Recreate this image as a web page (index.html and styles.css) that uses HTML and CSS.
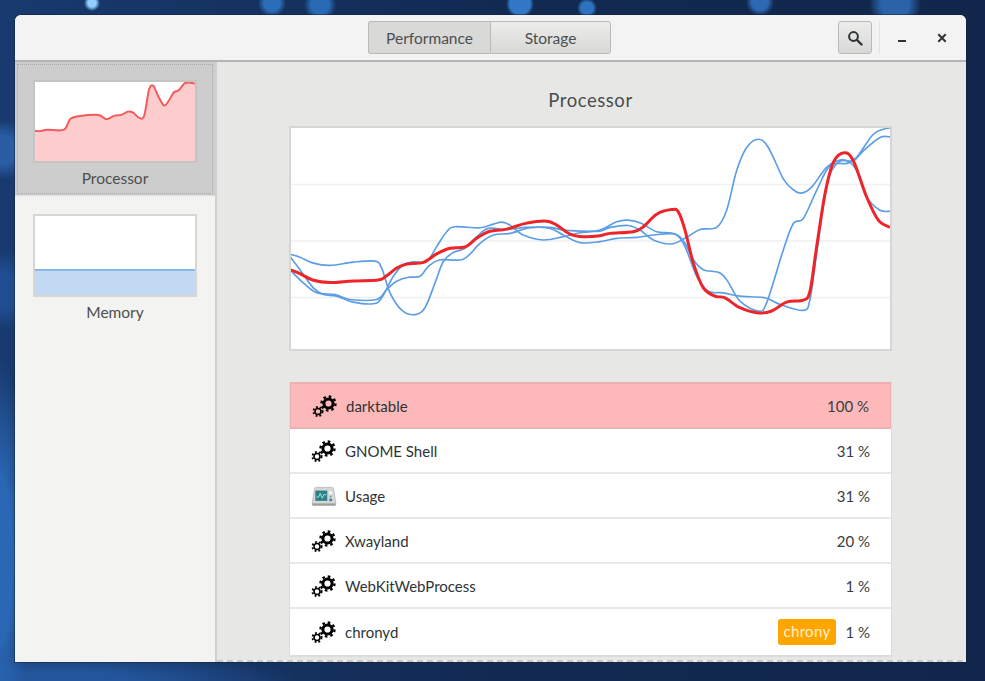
FILE: index.html
```html
<!DOCTYPE html>
<html lang="en">
<head>
<meta charset="utf-8">
<title>Usage</title>
<link rel="stylesheet" href="styles.css">
</head>
<body>
<svg class="defs" width="0" height="0" aria-hidden="true">
  <symbol id="gears" viewBox="0 0 26 24">
    <circle cx="16.5" cy="9.5" r="4.6" fill="none" stroke="#000" stroke-width="3"/>
    <circle cx="16.5" cy="9.5" r="7" fill="none" stroke="#000" stroke-width="2.4" stroke-dasharray="2.6 2.9"/>
    <circle cx="6" cy="17.5" r="3" fill="none" stroke="#000" stroke-width="1.6"/>
    <circle cx="6" cy="17.5" r="4.6" fill="none" stroke="#000" stroke-width="1.8" stroke-dasharray="1.8 2.02"/>
  </symbol>
  <symbol id="usage" viewBox="0 0 24 18">
    <rect x="1" y="15" width="22" height="3" rx="1" fill="#9aa0a0"/>
    <path d="M3 3Q3 1 5 1H19Q21 1 21 3L23 16H1Z" fill="#d4d7d5" stroke="#aeb2b0" stroke-width=".6"/>
    <rect x="4" y="4" width="11" height="9.5" fill="#2f7f88"/>
    <path d="M5 10L7 10L8.5 6.5L10.5 11L12 7.5L14 8" fill="none" stroke="#9fe8d8" stroke-width=".9"/>
    <rect x="16.5" y="4.5" width="3" height="3" fill="#f2f4f2"/>
    <circle cx="18" cy="9.5" r="1" fill="#7fa57c"/>
    <rect x="17" y="11.5" width="2.4" height="2.2" fill="#3c74c4"/>
  </symbol>
</svg>
<main class="window">
  <header class="titlebar">
    <div class="switcher">
      <button class="seg seg-on" type="button">Performance</button>
      <button class="seg" type="button">Storage</button>
    </div>
    <button class="search" type="button" aria-label="Search">
      <svg width="16" height="16" viewBox="0 0 16 16"><circle cx="6.5" cy="6.5" r="4.4" fill="none" stroke="#2e3436" stroke-width="2"/><path d="M10 10L14.5 14.5" stroke="#2e3436" stroke-width="2.4" stroke-linecap="round"/></svg>
    </button>
    <span class="sep"></span>
    <button class="ctl ctl-min" type="button" aria-label="Minimize">
      <svg width="10" height="10" viewBox="0 0 10 10"><rect x="1" y="7" width="8" height="2" fill="#2e3436"/></svg>
    </button>
    <button class="ctl ctl-close" type="button" aria-label="Close">
      <svg width="10" height="10" viewBox="0 0 10 10"><path d="M1.3 1.3L8.7 8.7M8.7 1.3L1.3 8.7" stroke="#2e3436" stroke-width="2"/></svg>
    </button>
  </header>
  <div class="body">
    <nav class="sidebar">
      <div class="tile tile-on">
        <svg class="thumb" viewBox="42 33 488 240" preserveAspectRatio="none"><path id="cpu-fill" fill="#fdcccc"/><path id="cpu-line" fill="none" stroke="#f4595c" stroke-width="6"/></svg>
        <span class="tile-label">Processor</span>
      </div>
      <div class="tile">
        <svg class="thumb" viewBox="0 0 161 80" preserveAspectRatio="none"><rect y="54.5" width="161" height="25.5" fill="#c3d9f3"/><path d="M0 54.5H161" stroke="#5b9be0" stroke-width="1.4"/></svg>
        <span class="tile-label">Memory</span>
      </div>
    </nav>
    <section class="content">
      <h2 class="heading">Processor</h2>
      <svg class="graph" viewBox="33 21 1797 669" preserveAspectRatio="none">
        <path d="M33 192H1830M33 363H1830M33 534H1830" stroke="#f0f0f0" stroke-width="4" fill="none"/>
        <path id="b1" class="blue"/>
        <path id="b2" class="blue"/>
        <path id="b3" class="blue"/>
        <path id="red" class="red"/>
      </svg>
      <ul class="list">
        <li class="row row-hot"><svg class="ico"><use href="#gears"/></svg><span class="name">darktable</span><span class="pct">100 %</span></li>
        <li class="row"><svg class="ico"><use href="#gears"/></svg><span class="name">GNOME Shell</span><span class="pct">31 %</span></li>
        <li class="row"><svg class="ico"><use href="#usage"/></svg><span class="name">Usage</span><span class="pct">31 %</span></li>
        <li class="row"><svg class="ico"><use href="#gears"/></svg><span class="name">Xwayland</span><span class="pct">20 %</span></li>
        <li class="row"><svg class="ico"><use href="#gears"/></svg><span class="name">WebKitWebProcess</span><span class="pct">1 %</span></li>
        <li class="row row-last"><svg class="ico"><use href="#gears"/></svg><span class="name">chronyd</span><span class="badge">chrony</span><span class="pct">1 %</span></li>
      </ul>
    </section>
  </div>
</main>
<script src="graph.js"></script>
</body>
</html>
```
FILE: styles.css
```css
* { box-sizing: border-box; }
html, body { margin: 0; height: 100%; }
body {
  overflow: hidden;
  padding: 15px 0 0 15px;
  font-family: Lato, "Noto Sans", sans-serif;
  color: #2e3436;
  background-color: #12274c;
  background-image:
    radial-gradient(circle at 92px 3px, #8fd0ff 0 4px, transparent 8px),
    radial-gradient(circle at 272px 3px, #2c6db8 0 8px, transparent 14px),
    radial-gradient(circle at 320px 5px, #2a6ab5 0 9px, transparent 16px),
    radial-gradient(circle at 520px 4px, #3378c6 0 10px, transparent 14px),
    radial-gradient(circle at 587px 8px, #2f72c0 0 6px, transparent 10px),
    radial-gradient(circle at 760px 2px, #2d69b2 0 8px, transparent 14px),
    radial-gradient(circle at 895px 4px, #2b62a8 0 14px, transparent 26px),
    radial-gradient(circle at 2px 150px, #2a5da3 0 14px, transparent 30px),
    radial-gradient(circle at 0 290px, #1f4d92 0 18px, transparent 40px),
    radial-gradient(ellipse 30px 200px at 0 560px, #2a67b4 0 40%, transparent 100%),
    radial-gradient(ellipse 240px 30px at 60px 681px, #23559b 0 30%, transparent 100%),
    linear-gradient(90deg, #183a6f, #122a52 50%, #11264a);
}
button { font: inherit; color: inherit; padding: 0; }
.defs { position: absolute; }

.window {
  display: flex;
  flex-direction: column;
  width: 951px;
  height: 647px;
  overflow: hidden;
  border-radius: 6px 6px 0 0;
  background: #e7e7e5;
  box-shadow: 0 0 0 1px rgba(20, 30, 50, .45);
}
.titlebar {
  display: flex;
  align-items: center;
  flex: none;
  height: 47px;
  padding: 0 0 0 353px;
  background: #f3f3f3;
  border-bottom: 2px solid #b4b4b2;
}
.switcher { display: flex; width: 243px; height: 33px; }
.seg {
  flex: 1 1 50%;
  border: 1px solid #b9b9b7;
  font-size: 15.5px;
  color: #4c4f50;
  background: linear-gradient(#ececea, #d8d8d6);
  border-radius: 0 3px 3px 0;
}
.seg-on {
  flex: none;
  width: 122px;
  border-right: 0;
  border-radius: 3px 0 0 3px;
  background: #d9d9d7;
}
.search {
  display: flex;
  align-items: center;
  justify-content: center;
  width: 34px;
  height: 33px;
  margin-left: 227px;
  border: 1px solid #b9b9b7;
  border-radius: 3px;
  background: linear-gradient(#ececea, #d8d8d6);
}
.sep { width: 1px; height: 33px; margin-left: 7px; background: #e2e2e0; }
.ctl {
  display: flex;
  align-items: center;
  justify-content: center;
  width: 20px;
  height: 20px;
  border: 0;
  background: none;
}
.ctl-min { margin-left: 12px; }
.ctl-close { margin-left: 20px; }

.body { display: flex; flex: 1; min-height: 0; }
.sidebar {
  flex: none;
  width: 202px;
  background: #f3f3f1;
  border-right: 2px solid #d0d0ce;
}
.tile {
  display: flex;
  flex-direction: column;
  align-items: center;
  height: 134px;
  padding-top: 18px;
}
.tile-on {
  background: #cdcdcd;
  border-bottom: 1px solid #dcdcda;
  outline: 1px dotted #a9a9a9;
  outline-offset: -3px;
}
.thumb {
  flex: none;
  width: 164px;
  height: 83px;
  background: #fff;
  border: 2px solid #c4c4c2;
}
.tile:not(.tile-on) .thumb { border-color: #d6d6d4; }
.tile-label { margin-top: 5px; font-size: 15.5px; line-height: 20px; color: #4d4f50; }

.content {
  position: relative;
  flex: 1;
  padding: 0 0 0 72px;
  background: #e7e7e5;
}
.content::after {
  content: "";
  position: absolute;
  left: 0;
  right: 0;
  bottom: 0;
  height: 2px;
  background: repeating-linear-gradient(90deg, #c9c9c7 0 6px, #efefed 6px 10px);
}
.heading {
  margin: 0;
  width: 603px;
  padding-top: 25px;
  height: 64px;
  font-size: 18.5px;
  letter-spacing: .55px;
  line-height: 27px;
  font-weight: 400;
  text-align: center;
  color: #4a4d4e;
}
.graph {
  display: block;
  width: 603px;
  height: 225px;
  background: #fff;
  border: 2px solid #d6d6d4;
}
.blue { fill: none; stroke: #5c9ee6; stroke-width: 5; }
.red { fill: none; stroke: #ef2428; stroke-width: 9; }
.list {
  list-style: none;
  width: 603px;
  margin: 31px 0 0;
  padding: 0;
  background: #fff;
  border: 1px solid #dcdcda;
  border-top: 0;
  border-bottom-width: 2px;
}
.row {
  display: flex;
  align-items: center;
  height: 45px;
  padding: 0 21px;
  border-bottom: 2px solid #e8e8e6;
  font-size: 15px;
}
.row-hot {
  height: 47px;
  background: #fdb9b9;
  border: 2px solid #ecb0b0;
  border-width: 2px 1px;
}
.row-last { height: 46px; border-bottom: 0; }
.ico { flex: none; width: 26px; height: 24px; margin-right: 8px; }
.name { flex: 1; }
.badge {
  height: 26px;
  margin-right: 9px;
  padding: 0 6px;
  border-radius: 3px;
  background: #ffa500;
  color: #fff0cc;
  letter-spacing: .3px;
  line-height: 25px;
}
.pct { color: #3a3d3e; }
```
FILE: graph.js
```javascript
var SERIES = {
  b1: [[30,410],[60,450],[100,505],[130,525],[170,530],[220,548],[280,553],[305,535],[340,470],[370,435],[400,426],[440,425],[470,380],[500,335],[525,320],[600,323],[640,312],[665,306],[690,315],[730,345],[790,360],[850,350],[900,338],[960,330],[1010,305],[1045,300],[1085,310],[1130,335],[1185,342],[1215,380],[1250,470],[1285,515],[1330,520],[1380,530],[1455,535],[1500,555],[1570,573],[1590,540],[1610,400],[1640,200],[1665,135],[1700,120],[1730,150],[1760,230],[1800,270],[1830,273]],
  b2: [[30,403],[60,412],[100,430],[150,437],[220,427],[285,424],[305,445],[330,520],[365,572],[405,586],[435,565],[465,490],[490,425],[520,398],[555,385],[590,350],[625,325],[680,328],[740,322],[810,322],[850,330],[900,333],[960,333],[990,322],[1045,316],[1080,330],[1120,360],[1175,372],[1220,352],[1260,328],[1310,322],[1340,270],[1370,150],[1400,80],[1435,55],[1465,80],[1510,175],[1540,208],[1565,218],[1595,200],[1640,140],[1680,118],[1720,120],[1750,90],[1800,50],[1830,48]],
  b3: [[30,450],[70,490],[110,520],[165,525],[210,540],[290,540],[320,510],[350,485],[385,473],[420,470],[445,440],[480,420],[550,418],[600,370],[640,345],[690,340],[750,323],[810,325],[850,345],[900,368],[960,365],[1010,355],[1070,352],[1120,345],[1185,342],[1215,370],[1240,420],[1270,450],[1315,458],[1340,480],[1380,545],[1435,575],[1460,550],[1510,390],[1540,310],[1570,295],[1610,210],[1650,135],[1700,128],[1730,110],[1780,40],[1820,22],[1830,22]],
  red: [[30,450],[60,462],[100,482],[150,489],[220,484],[295,481],[320,468],[350,445],[380,433],[430,428],[470,402],[510,385],[555,381],[590,355],[625,335],[680,327],[740,309],[800,303],[830,315],[870,342],[910,350],[960,347],[990,340],[1060,335],[1090,320],[1130,282],[1175,268],[1195,275],[1215,330],[1240,430],[1270,505],[1305,530],[1335,535],[1380,565],[1435,581],[1475,575],[1520,548],[1570,542],[1590,515],[1610,380],[1635,220],[1660,125],[1692,96],[1720,120],[1760,230],[1795,300],[1830,322]]
};
var CPU = [[42,182],[60,182],[80,178],[130,178],[150,145],[180,136],[235,133],[260,146],[285,135],[305,133],[325,123],[340,125],[360,142],[375,135],[390,55],[403,45],[415,70],[435,104],[450,90],[465,65],[480,58],[498,37],[515,35],[530,38]];

function smooth(p) {
  var d = "M" + p[0][0] + " " + p[0][1];
  for (var i = 0; i < p.length - 1; i++) {
    var a = p[Math.max(i - 1, 0)], b = p[i], c = p[i + 1], e = p[Math.min(i + 2, p.length - 1)];
    d += "C" + (b[0] + (c[0] - a[0]) / 6) + " " + (b[1] + (c[1] - a[1]) / 6) + " " +
      (c[0] - (e[0] - b[0]) / 6) + " " + (c[1] - (e[1] - b[1]) / 6) + " " + c[0] + " " + c[1];
  }
  return d;
}
Object.keys(SERIES).forEach(function (id) {
  document.getElementById(id).setAttribute("d", smooth(SERIES[id]));
});
var cpu = smooth(CPU);
document.getElementById("cpu-line").setAttribute("d", cpu);
document.getElementById("cpu-fill").setAttribute("d", cpu + "V273H42Z");
```
